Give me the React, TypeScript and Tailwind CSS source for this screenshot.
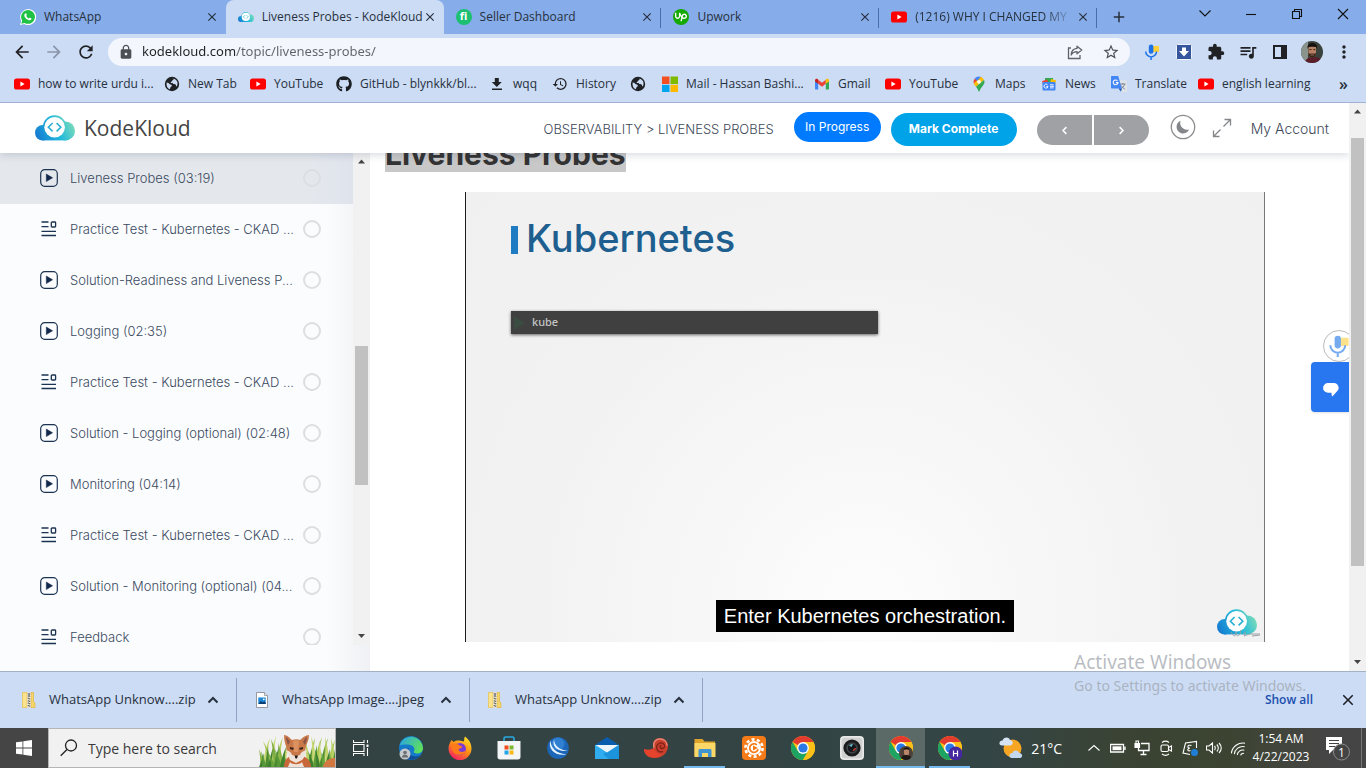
import type { ReactNode } from "react";
import {
  MdArrowBack,
  MdArrowForward,
  MdRefresh,
  MdLock,
  MdExtension,
  MdQueueMusic,
  MdStarBorder,
  MdMoreVert,
  MdClose,
  MdHistory,
  MdAdd,
} from "react-icons/md";
import { SiUpwork } from "react-icons/si";
import { FaGithub } from "react-icons/fa";

/* ---------- drawings ---------- */

function CloudLogo({ id, className }: { id: string; className: string }) {
  return (
    <svg viewBox="0 0 40 26" className={className} aria-hidden="true">
      <defs>
        <linearGradient id={id} gradientUnits="userSpaceOnUse" x1="0" y1="24" x2="38" y2="6">
          <stop offset="0" stopColor="#1674d0" />
          <stop offset="0.55" stopColor="#1fb9dc" />
          <stop offset="1" stopColor="#7edcb9" />
        </linearGradient>
      </defs>
      <g fill={`url(#${id})`}>
        <circle cx="7.7" cy="17.7" r="7.7" />
        <circle cx="19.6" cy="12" r="11.700" />
        <circle cx="30.5" cy="15.900" r="9.500" />
        <rect x="7" y="14" width="24" height="11.400" />
      </g>
      <circle cx="19.600" cy="12.300" r="10.300" fill="#fff" />
      <path
        d="M17.600 8 13.400 12.200l4.200 4.200M21.600 8l4.200 4.200-4.200 4.200"
        fill="none"
        stroke="#27afd3"
        strokeWidth="1.600"
      />
    </svg>
  );
}

function YouTube() {
  return (
    <svg viewBox="0 0 16 16" className="size-4 shrink-0" aria-hidden="true">
      <rect x="0" y="2.4" width="16" height="11.2" rx="2.6" fill="#f00" />
      <path d="M6.4 5.6v4.8L10.6 8Z" fill="#fff" />
    </svg>
  );
}

function WhatsApp() {
  return (
    <svg viewBox="0 0 16 16" className="size-4 shrink-0" aria-hidden="true">
      <path d="M0 16 1.2 11.9A8 8 0 1 1 4.2 15Z" fill="#fff" />
      <path d="M1.3 14.7 2.2 11.6A6.9 6.9 0 1 1 4.6 13.9Z" fill="#20c245" />
      <path
        d="M5.2 4.400C5.800 4 6.200 4.200 6.400 4.700L6.800 5.800C6.900 6.200 6.300 6.700 6.300 7 6.800 8 7.700 8.900 8.800 9.400 9.200 9.500 9.600 8.600 10 8.700L11.200 9.300C11.800 9.700 11.300 10.800 10.300 11.200 8.400 11.900 4 9 4.300 6 4.400 5.300 4.700 4.700 5.200 4.400Z"
        fill="#fff"
      />
    </svg>
  );
}

function Fiverr() {
  return (
    <span className="flex size-4 shrink-0 items-center justify-center rounded-full bg-[#1dbf73] pb-px text-[11px] font-bold text-white" aria-hidden="true">
      fi
    </span>
  );
}

function Upwork() {
  return (
    <span className="flex size-4 shrink-0 items-center justify-center rounded-full bg-[#14a800] text-[12px] text-white" aria-hidden="true">
      <SiUpwork />
    </span>
  );
}

function Globe() {
  return (
    <svg viewBox="0 0 16 16" className="size-4 shrink-0" aria-hidden="true">
      <circle cx="8" cy="8" r="7.200" fill="#202124" />
      <path
        d="M2.600 6.500c1.500.3 2 .2 2.600 1.200.7 1 2.500.4 2.600 1.700 0 1.300-1.300 1.100-1.400 2.200 0 .8-.4 1.400-.9 1.700C3.300 12.200 2.200 10 2.600 6.500ZM8 2.400c1.300-.1 1.600.3 1.500 1-.2.8-1.400.5-1.500 1.500 0 .9-1.600.5-1.500 1.400.3.8 2.200.2 2.600 1.200.4.900 1.800.3 2.500 1 .8.7.200 1.800 1.100 1.900 1.200-2 1-4.300.2-5.500C11.800 3.300 10.300 2.300 8 2.400Z"
        fill="#ccdcf5"
      />
    </svg>
  );
}

function DownloadMark() {
  return (
    <svg viewBox="0 0 16 16" className="size-4 shrink-0" aria-hidden="true" fill="#202124">
      <path d="M5.800 2h4v4h3L7.800 11 2.800 6h3ZM3 12.500h10V14H3Z" />
    </svg>
  );
}

function Microsoft() {
  return (
    <svg viewBox="0 0 16 16" className="size-4 shrink-0" aria-hidden="true">
      <path d="M0 .5h7.500V8H0Z" fill="#f25022" />
      <path d="M8.500.5H16V8H8.500Z" fill="#7fba00" />
      <path d="M0 8.800h7.500V16H0Z" fill="#00a4ef" />
      <path d="M8.500 8.800H16V16H8.500Z" fill="#ffb900" />
    </svg>
  );
}

function Gmail() {
  return (
    <svg viewBox="0 0 16 16" className="size-4 shrink-0" aria-hidden="true">
      <path d="M1 4v8.500c0 .6.4 1 1 1h2.200V7.300Z" fill="#4285f4" />
      <path d="M15 4v8.500c0 .6-.4 1-1 1h-2.200V7.300Z" fill="#34a853" />
      <path d="M4.200 3.800v4L8 10.700l3.800-2.900v-4L8 6.700Z" fill="#ea4335" />
      <path d="M1 4.300c0-1.500 1.600-2 2.600-1.300l.6.800v4L1 5.500Z" fill="#c5221f" />
      <path d="M15 4.300c0-1.500-1.600-2-2.600-1.300l-.6.800v4L15 5.500Z" fill="#fbbc04" />
    </svg>
  );
}

function Maps() {
  return (
    <svg viewBox="0 0 16 16" className="size-4 shrink-0" aria-hidden="true">
      <path d="M3.700 2.500A5.600 5.600 0 0 0 2.800 7.500L7 5.200Z" fill="#ea4335" />
      <path d="M2.700 7.400c.6 1.300 1.500 2.300 2.300 3.400L13 4A5.500 5.500 0 0 0 9.800.8Z" fill="#fbbc04" />
      <path d="M9.700.8A5.500 5.500 0 0 0 3.700 2.500L6.400 5Z" fill="#4285f4" />
      <path d="M5 10.800c1.300 1.700 2 2.700 2.400 4.200.2.700 1 .7 1.200 0 1-3.700 4.900-5.500 4.900-9.500 0-.6-.2-1.100-.5-1.500Z" fill="#34a853" />
      <circle cx="8" cy="5.800" r="1.900" fill="#fff" />
    </svg>
  );
}

function News() {
  return (
    <svg viewBox="0 0 16 16" className="size-4 shrink-0" aria-hidden="true">
      <path d="M4 2h8v5H4Z" fill="#34a853" />
      <path d="m10 3 5 1.300-1 5L9 8Z" fill="#fbbc04" />
      <path d="m1.200 5 5-1.500L8 8 2 9Z" fill="#ea4335" />
      <rect x="1.500" y="6" width="13" height="8.500" rx="1" fill="#4285f4" />
      <path d="M6.500 8.800a2 2 0 1 0 .5 1.600H5.200M9 8.800h3.500M9 10.300h4M9 11.900h3.500" stroke="#fff" fill="none" strokeWidth=".9" />
    </svg>
  );
}

function Translate() {
  return (
    <svg viewBox="0 0 16 16" className="size-4 shrink-0" aria-hidden="true">
      <path d="M6.500 4.500H15c.6 0 1 .4 1 1V15c0 .5-.4 1-1 1H9.800Z" fill="#dfe3e8" />
      <path d="M9 8h5.500M11.800 7v1M13.500 8c-.3 2-2 3.800-3.500 4.600M10.500 9.500c.6 1.500 2 3 3.300 3.600" stroke="#6f7c8d" fill="none" strokeWidth=".9" />
      <path d="M1 0h6.200l3.600 12.500H1c-.6 0-1-.4-1-1V1c0-.6.400-1 1-1Z" fill="#4285f4" />
      <path d="m7.500 12.500 2.500 3.300.8-3.300Z" fill="#1a56c4" />
      <path d="M6.400 4.800A2.400 2.400 0 1 0 7 6.600H4.800" stroke="#fff" fill="none" strokeWidth="1.100" />
    </svg>
  );
}

function VoiceMic({ className }: { className: string }) {
  return (
    <svg viewBox="0 0 16 16" className={className} aria-hidden="true">
      <rect x="9" y="2" width="6" height="6" rx=".5" fill="#fdd03b" />
      <rect x="4.800" y=".5" width="4.600" height="9.300" rx="2.300" fill="#1a73e8" />
      <path d="M1.700 7.500a5.400 5.400 0 0 0 10.800 0M7.100 13v3" stroke="#1a73e8" strokeWidth="1.500" fill="none" />
    </svg>
  );
}

function Share() {
  return (
    <svg viewBox="0 0 18 18" className="size-[18px]" fill="none" stroke="#5f6368" strokeWidth="1.300" aria-hidden="true">
      <path d="M5 5H2.500v10.500h11.500V12" />
      <path d="M11 3.200 15.800 7 11 10.800V8.600C8 8.600 6.300 9.700 5.200 12 5.300 8.300 7.300 5.700 11 5.400Z" strokeLinejoin="round" />
    </svg>
  );
}

function BlueDownload() {
  return (
    <svg viewBox="0 0 16 16" className="size-4" aria-hidden="true">
      <rect x=".5" y=".5" width="15" height="15" rx="1" fill="#35559d" stroke="#eef3fb" />
      <path d="M6 3.500h4V7h3l-5 5.500L3 7h3Z" fill="#fff" />
    </svg>
  );
}

function Portrait({ className }: { className: string }) {
  return (
    <svg viewBox="0 0 22 22" className={className} aria-hidden="true">
      <clipPath id="portrait-round">
        <circle cx="11" cy="11" r="11" />
      </clipPath>
      <g clipPath="url(#portrait-round)">
        <path d="M0 0h22v22H0Z" fill="#39423d" />
        <path d="M0 0h7v22H0Z" fill="#8a948c" />
        <path d="M4 22c0-4 4-6 8-6s10 1 10 6Z" fill="#5a1e2b" />
        <path d="M7.500 6h7.500v6c0 3-1.800 5-3.800 5S7.500 15 7.500 12Z" fill="#b98265" />
        <path d="M6.500 8C6 3 9 2 11.500 2s5.300 1.500 4.500 6l-1-2-4-.8L7.500 6Z" fill="#17120f" />
        <path d="M7.500 12c1 1 2.200.6 3.700.6s2.800.4 3.800-.6c0 3.500-1.800 5-3.800 5s-3.700-1.500-3.700-5Z" fill="#3a251c" />
        <path d="M9.500 14h3.500" stroke="#a87c66" strokeWidth=".8" />
        <path d="M8.500 8.600h2M12.300 8.600h2" stroke="#2b1b15" strokeWidth=".9" />
      </g>
    </svg>
  );
}

function Triangle({ down = false }: { down?: boolean }) {
  return (
    <svg viewBox="0 0 17 17" className="size-[17px] shrink-0" aria-hidden="true">
      <path d={down ? "M5 6h7L8.500 10Z" : "M5 10.500h7L8.500 6.500Z"} fill="#444" />
    </svg>
  );
}

function PlayBox() {
  return (
    <svg viewBox="0 0 18 18" className="size-[18px] shrink-0" aria-hidden="true">
      <rect x=".7" y=".7" width="16.600" height="16.600" rx="4" fill="none" stroke="#1b3350" strokeWidth="1.200" />
      <path d="M6.300 5v7.600L12.600 8.800Z" fill="#12284a" stroke="#12284a" strokeWidth=".5" strokeLinejoin="round" />
    </svg>
  );
}

function QuizLines() {
  return (
    <svg viewBox="0 0 18 18" className="size-[18px] shrink-0" fill="none" stroke="#1b3350" strokeWidth="1.300" aria-hidden="true">
      <path d="M1.500 2h7M1.500 6.600h7M1.500 11.400h14.500M1.500 15.500h14.500" />
      <rect x="11.300" y="2" width="4.300" height="5" rx=".8" />
    </svg>
  );
}

function ZipFile() {
  return (
    <svg viewBox="0 0 16 16" className="size-4 shrink-0" aria-hidden="true">
      <path d="M1.500.5H6V15.500H1.500Z" fill="#fbe28d" stroke="#e7c14b" strokeWidth=".7" />
      <path d="M10 .5h2.500V10l1.500 1v4.500h-4Z" fill="#f6d56c" stroke="#dfb53c" strokeWidth=".7" />
      <path d="M6 .500h4v15H6Z" fill="#efe6c8" />
      <path d="M7.300 1v14M8.700 1.500V15" stroke="#555" strokeWidth="1.100" strokeDasharray="1.200 1.200" />
      <path d="M7 1h2v4H7Z" fill="#8b8d90" />
    </svg>
  );
}

function ImageFile() {
  return (
    <svg viewBox="0 0 16 16" className="size-4 shrink-0" aria-hidden="true">
      <path d="M2.500.5h8L13.500 3.500v12h-11Z" fill="#fff" stroke="#8b8f96" strokeWidth=".9" />
      <path d="M10.500.5v3h3" fill="#e7e9ec" stroke="#8b8f96" strokeWidth=".8" />
      <rect x="4.300" y="5.500" width="7.400" height="6.500" fill="#1c86d8" />
      <path d="m4.300 12 2.700-3 1.700 1.500 1.500-1.200 1.500 1.500V12Z" fill="#0b3c6f" />
      <circle cx="9.800" cy="7.300" r=".9" fill="#fff" />
    </svg>
  );
}

function Chevron({ className }: { className: string }) {
  return (
    <svg viewBox="0 0 12 12" className={className} fill="none" stroke="currentColor" strokeWidth="2" aria-hidden="true">
      <path d="m1.500 8.500 4.500-4.500 4.500 4.500" />
    </svg>
  );
}

/* Each blade: base x, tip x, tip y, shade. */
const blades: [number, number, number, string][] = [
  [3, 0, 20, "#8fb544"], [6, 11, 9, "#c3d56c"], [10, 4, 12, "#a5c352"], [13, 17, 7, "#c9d977"],
  [16, 12, 10, "#7fae3f"], [19, 24, 8, "#b9cf60"], [22, 19, 14, "#8ab544"], [25, 30, 12, "#c3d56c"],
  [49, 46, 12, "#b9cf60"], [52, 56, 9, "#8fb544"], [55, 52, 7, "#c9d977"], [58, 63, 8, "#a5c352"],
  [61, 60, 12, "#c3d56c"], [64, 69, 9, "#7fae3f"], [68, 66, 8, "#c3d56c"], [71, 76, 11, "#a5c352"], [74, 72, 9, "#b9cf60"],
  [2, 5, 24, "#3f8030"], [5, 2, 22, "#59993a"], [8, 9, 17, "#4b8c33"], [11, 14, 19, "#3f8030"],
  [14, 9, 23, "#66a33c"], [17, 20, 17, "#4b8c33"], [20, 16, 20, "#59993a"], [23, 27, 18, "#3f8030"], [26, 25, 24, "#4b8c33"],
  [50, 53, 20, "#4b8c33"], [53, 49, 22, "#3f8030"], [56, 58, 16, "#59993a"], [59, 56, 20, "#3f8030"],
  [62, 66, 19, "#4b8c33"], [65, 62, 23, "#66a33c"], [68, 71, 20, "#3f8030"], [72, 70, 24, "#59993a"], [75, 76, 20, "#4b8c33"],
];

function Fox() {
  return (
    <svg viewBox="0 0 76 38" className="h-[38px] w-[76px] shrink-0" aria-hidden="true">
      {blades.map(([x, tx, ty, fill], i) => (
        <path key={i} fill={fill} d={`M${x - 2} 38Q${x - 1} ${ty + 12} ${tx} ${ty}Q${x + 2} ${ty + 12} ${x + 2} 38Z`} />
      ))}
      <path d="M64 38c1-6 6-9 12-9v9Z" fill="#d2773f" />
      <path d="M25 38c0-7 4-12 12-12s15 4 15 12Z" fill="#c8683a" />
      <path d="M25 6c3 0 6 3 8 5 3-1 6-1 8 0 2-2 6-5 9-5 0 5-2 8-3 11l-1 6-4 6-5 3-5-3-4-6-1-6c-1-3-2-6-2-11Z" fill="#c9784a" />
      <path d="M27 8c2 1 3 3 4 5l-2 3c-1-3-2-5-2-8ZM48 8c-2 1-3 3-4 5l2 3c1-3 2-5 2-8Z" fill="#8a5646" />
      <path d="m34 12 3-1 3 1-1 11h-4Z" fill="#dc9160" />
      <path d="M27 21c3 1 5 2 6 5l4 1 4-1c1-3 3-4 7-5-1 4-3 8-5 10l-6 3-6-3Z" fill="#efe4dc" />
      <path d="m31 18 4 1-1 2-3-1ZM44 18l-4 1 1 2 3-1Z" fill="#3b2418" />
      <path d="M35.500 26.500h3.500l-1 3h-1.500Z" fill="#241a17" />
      <path d="M31 33c2 3 10 3 12 0l2 5H29Z" fill="#efe2d8" />
    </svg>
  );
}

function Chrome({ badge }: { badge?: ReactNode }) {
  return (
    <svg viewBox="0 0 24 24" className="size-6" aria-hidden="true">
      <circle cx="12" cy="12" r="12" fill="#fbc116" />
      <path d="M12 12 1.600 6A12 12 0 0 1 22.400 6H12Z" fill="#e33b2e" />
      <path d="M1.600 6A12 12 0 0 0 12 24l5.200-9L12 12 6.800 15Z" fill="#1da462" />
      <path d="M12 6h10.400A12 12 0 0 1 12 24l5.200-9Z" fill="#fbc116" />
      <circle cx="12" cy="12" r="5.900" fill="#fff" />
      <circle cx="12" cy="12" r="4.600" fill="#2a79e6" />
      {badge}
    </svg>
  );
}

const taskbarApps: { label: string; icon: ReactNode; state?: string }[] = [
  {
    label: "Microsoft Edge",
    icon: (
      <svg viewBox="0 0 24 24" className="size-6">
        <defs>
          <linearGradient id="edge-top" x1="0" x2="1" y1="0.200" y2="0.600">
            <stop offset="0" stopColor="#2aa7e0" />
            <stop offset="1" stopColor="#5fe05a" />
          </linearGradient>
        </defs>
        <circle cx="12" cy="12" r="12" fill="#1579c9" />
        <path d="M.6 9A12 12 0 0 1 24 12c0 4-3 5.500-6 5.500-2.500 0-3.800-1-3-2.500 1-1.800.5-5-3.500-6C7 8 2.500 9 .6 9Z" fill="url(#edge-top)" />
        <path d="M10 12c-2 5 2 9 7 8.500 2-.2 3.500-1 4.500-1.500A12 12 0 0 1 8 23C5 19 6 13 10 12Z" fill="#0f4d96" />
        <circle cx="6" cy="18" r="5.500" fill="#c6c9cc" />
        <circle cx="6" cy="16.500" r="1.800" fill="#6a6f74" />
        <path d="M2.800 21.500c.4-4 6-4 6.400 0Z" fill="#6a6f74" />
      </svg>
    ),
  },
  {
    label: "Firefox",
    icon: (
      <svg viewBox="0 0 24 24" className="size-6">
        <defs>
          <linearGradient id="fox-fire" x1="0.800" x2="0.200" y1="0" y2="1">
            <stop offset="0" stopColor="#ffe226" />
            <stop offset="0.500" stopColor="#ff8a16" />
            <stop offset="1" stopColor="#f5156c" />
          </linearGradient>
        </defs>
        <path d="M17 .5c4 3 6.500 7 6.500 12A11.500 11.500 0 0 1 .5 12.500C.5 9 2 6.500 3.500 4L5.500 6c2-1.500 4-1.800 6-1.500L16 5.500C16.300 4 16 2 17 .5Z" fill="url(#fox-fire)" />
        <circle cx="12" cy="13" r="6" fill="#7b3bd8" />
        <path d="M3 9c3-2 6-2 8.500.5 2 .3 3 1 2.500 2-1 1-3 .8-3.500 2 .5 3 5 3 7.500 1-1 5-10 6-13 1C3.500 13 3 11 3 9Z" fill="#ff7a1a" />
      </svg>
    ),
  },
  {
    label: "Microsoft Store",
    icon: (
      <svg viewBox="0 0 24 24" className="size-6">
        <path d="M7 6V2.500c0-.8.500-1.500 1.500-1.500h7c1 0 1.500.7 1.500 1.500V6" fill="none" stroke="#29a9e0" strokeWidth="1.600" />
        <path d="M.5 5h23v16c0 1.500-1 2.500-2.500 2.500H3C1.500 23.500.5 22.500.5 21Z" fill="#f4f5f6" />
        <path d="M7.500 9.500h4v4h-4Z" fill="#f04f1d" />
        <path d="M12.500 9.500h4v4h-4Z" fill="#7eb82f" />
        <path d="M7.500 14.500h4v4h-4Z" fill="#22a5e6" />
        <path d="M12.500 14.500h4v4h-4Z" fill="#fbb917" />
      </svg>
    ),
  },
  {
    label: "Remote tool",
    icon: (
      <svg viewBox="0 0 24 24" className="size-6">
        <circle cx="12" cy="12" r="10.800" fill="#1c66b7" />
        <circle cx="12" cy="8" r="6.500" fill="#2f7fd2" />
        <path d="M4.500 4.500C5 12 9.500 17 20.500 18.500 9 20.500 1.500 13 4.500 4.500ZM8 3.500c.5 6 5 10.500 14 11C13 16.500 5.500 11.500 8 3.500Z" fill="#e5f2ff" />
      </svg>
    ),
  },
  {
    label: "Mail",
    icon: (
      <svg viewBox="0 0 24 24" className="size-6">
        <path d="M0 9 12 1l12 8v4H0Z" fill="#0a5dac" />
        <path d="M0 9v14h24V9Z" fill="#2fadf0" />
        <path d="M24 9v14H14L8 18Z" fill="#1b93dd" />
        <path d="M.5 9h23L12 16.500Z" fill="#eef5fa" />
      </svg>
    ),
  },
  {
    label: "Nautilus",
    icon: (
      <svg viewBox="0 0 24 24" className="size-6">
        <path d="M0 13c4 1.500 7 1 10-1C7 6 11 2 16 2c5 0 8 4 8 8 0 7-6 12-12 12C5 22 0 18 0 13Z" fill="#c9402d" />
        <path d="M0 13c4 1.500 7 1 10-1 1 4 4 6 8 6-5 6-18 5-18-5Z" fill="#e5432c" />
        <path d="M10 12C8.500 6 12 3 16 3c4.500 0 7 3 7 7" fill="none" stroke="#e58573" strokeWidth="1.300" />
        <path d="M19 15.500c-6 2.500-9-6-3-8.500 5-1.200 6 5 2.500 5.500-3 .3-3-3-1-3" fill="none" stroke="#7d2018" strokeWidth="1.300" />
      </svg>
    ),
  },
  {
    label: "File Explorer",
    state: "running",
    icon: (
      <svg viewBox="0 0 24 24" className="size-6">
        <path d="M1.500 3h8l2 2.500H22V20H1.500Z" fill="#dfa42a" />
        <path d="M1.500 7h21v14h-21Z" fill="#fbd768" />
        <path d="M5.500 21v-6.500c0-1 .7-1.500 1.500-1.500h10c1 0 1.500.7 1.500 1.500V21H15v-4H9v4Z" fill="#3f94d1" />
      </svg>
    ),
  },
  {
    label: "Recorder",
    icon: (
      <svg viewBox="0 0 24 24" className="size-6">
        <rect width="24" height="24" rx="4" fill="#f47b18" />
        <circle cx="12" cy="12" r="8.600" fill="none" stroke="#fff" strokeWidth="2.600" strokeDasharray="3 2.400" />
        <circle cx="12" cy="12" r="7" fill="#fff" />
        <path d="M14.800 8.800a4.300 4.300 0 1 0 1.300 4.500" fill="none" stroke="#f47b18" strokeWidth="1.700" />
        <path d="M11 9.500v5l5-2.500Z" fill="#f47b18" />
      </svg>
    ),
  },
  { label: "Google Chrome", icon: <Chrome /> },
  {
    label: "Camera",
    icon: (
      <svg viewBox="0 0 24 24" className="size-6">
        <rect width="24" height="24" rx="4" fill="#dcdcdc" />
        <rect x="1" y="1" width="22" height="22" rx="3.500" fill="#d0d0d0" stroke="#f4f4f4" />
        <circle cx="12" cy="12" r="8.600" fill="#1a1b1d" />
        <circle cx="12" cy="12" r="5.800" fill="#3d4347" />
        <circle cx="12" cy="12" r="4" fill="#14171c" />
        <path d="M9 9.500a4 4 0 0 1 4-1.500l-1.500 3Z" fill="#67b7c4" />
        <path d="M13 14.500c1.500 0 2.500-1 2.500-2.500Z" fill="#c7432f" stroke="#c7432f" />
      </svg>
    ),
  },
  {
    label: "Google Chrome, first profile",
    state: "active",
    icon: (
      <Chrome
        badge={
          <g>
            <circle cx="17" cy="17" r="7" fill="#4d4037" />
            <path d="M15 13h5v4c0 2-1.200 3.300-2.500 3.300S15 19 15 17Z" fill="#bb8569" />
            <path d="M14.500 14c0-3 5.500-3.500 6 0l-3-.7Z" fill="#15100e" />
            <path d="M12 22c1-2.500 3-3 5.500-3s4 1 4.500 2.500C19 25 14 24.500 12 22Z" fill="#1d1716" />
          </g>
        }
      />
    ),
  },
  {
    label: "Google Chrome, second profile",
    state: "open",
    icon: (
      <Chrome
        badge={
          <g>
            <circle cx="17.500" cy="17.500" r="7" fill="#4527a0" />
            <path d="M15.500 14.500v6M19.500 14.500v6M15.500 17.500h4" stroke="#fff" strokeWidth="1.200" />
          </g>
        }
      />
    ),
  },
];

/* ---------- data ---------- */

const tabs = [
  { title: "WhatsApp", icon: <WhatsApp /> },
  { title: "Liveness Probes - KodeKloud", icon: <CloudLogo id="tab-cloud" className="w-4 shrink-0" />, active: true },
  { title: "Seller Dashboard", icon: <Fiverr />, divider: true },
  { title: "Upwork", icon: <Upwork />, divider: true },
  { title: "(1216) WHY I CHANGED MY", icon: <YouTube />, divider: true, fade: true },
];

const bookmarks = [
  { label: "how to write urdu i...", icon: <YouTube />, width: "w-[150px]" },
  { label: "New Tab", icon: <Globe />, width: "w-[86px]" },
  { label: "YouTube", icon: <YouTube />, width: "w-[86px]" },
  { label: "GitHub - blynkkk/bl...", icon: <FaGithub className="size-4 shrink-0 text-[#1b1f23]" />, width: "w-[153px]" },
  { label: "wqq", icon: <DownloadMark />, width: "w-[63px]" },
  { label: "History", icon: <MdHistory className="size-4 shrink-0 text-[#202124]" />, width: "w-[78px]" },
  { label: "", icon: <Globe />, width: "w-8" },
  { label: "Mail - Hassan Bashi...", icon: <Microsoft />, width: "w-[152px]" },
  { label: "Gmail", icon: <Gmail />, width: "w-[71px]" },
  { label: "YouTube", icon: <YouTube />, width: "w-[86px]" },
  { label: "Maps", icon: <Maps />, width: "w-[70px]" },
  { label: "News", icon: <News />, width: "w-[70px]" },
  { label: "Translate", icon: <Translate />, width: "w-[87px]" },
  { label: "english learning", icon: <YouTube />, width: "w-[124px]" },
];

const lessons = [
  { title: "Liveness Probes (03:19)", video: true, current: true },
  { title: "Practice Test - Kubernetes - CKAD ..." },
  { title: "Solution-Readiness and Liveness P...", video: true },
  { title: "Logging (02:35)", video: true },
  { title: "Practice Test - Kubernetes - CKAD ..." },
  { title: "Solution - Logging (optional) (02:48)", video: true },
  { title: "Monitoring (04:14)", video: true },
  { title: "Practice Test - Kubernetes - CKAD ..." },
  { title: "Solution - Monitoring (optional) (04...", video: true },
  { title: "Feedback" },
];

const downloads = [
  { name: "WhatsApp Unknow....zip", icon: <ZipFile /> },
  { name: "WhatsApp Image....jpeg", icon: <ImageFile /> },
  { name: "WhatsApp Unknow....zip", icon: <ZipFile /> },
];

/* ---------- browser chrome ---------- */

function TabStrip() {
  return (
    <div className="flex h-[34px] shrink-0 bg-[#86ade9] pl-2">
      <div className="flex max-w-[1089px] min-w-0 flex-1">
        {tabs.map((tab) => (
          <div
            key={tab.title}
            className={
              tab.active
                ? "flex min-w-0 flex-1 items-center rounded-t-lg bg-[#ccdcf5] pr-[6px] pl-3"
                : "relative flex min-w-0 flex-1 items-center pr-[6px] pl-3"
            }
          >
            {tab.icon}
            <span
              className={
                tab.fade
                  ? "ml-2 min-w-0 flex-1 mask-r-from-80% text-[12px] whitespace-nowrap"
                  : "ml-2 min-w-0 flex-1 text-[12px] whitespace-nowrap"
              }
            >
              {tab.title}
            </span>
            <button type="button" aria-label={`Close ${tab.title}`} className="flex size-4 shrink-0 items-center justify-center">
              <MdClose className="size-[14px]" />
            </button>
            {tab.divider && <span className="absolute top-2 right-0 h-5 w-px bg-[#4a6fa8]" />}
          </div>
        ))}
      </div>
      <button type="button" aria-label="New tab" className="flex w-11 items-center justify-center">
        <MdAdd className="size-[18px]" />
      </button>
      <div className="ml-auto flex h-7 text-[#111]">
        {[
          ["Search tabs", "M2.500 4.500 8 10l5.500-5.500"],
          ["Minimize", "M3 8.500h10"],
          ["Restore", "M3.500 5.500h7v7h-7ZM5.500 5.500v-2h7v7h-2"],
          ["Close window", "m3 3 10 10M13 3 3 13"],
        ].map(([label, d]) => (
          <button key={label} type="button" aria-label={label} className="flex w-[46px] items-center justify-center">
            <svg viewBox="0 0 16 16" className="size-4" fill="none" stroke="currentColor" strokeWidth="1.100">
              <path d={d} />
            </svg>
          </button>
        ))}
      </div>
    </div>
  );
}

function Toolbar() {
  const tool = "flex w-8 items-center justify-center";
  return (
    <div className="flex h-9 shrink-0 items-center px-[6px] text-[#202124]">
      <button type="button" aria-label="Back" className={tool}><MdArrowBack className="size-[20px]" /></button>
      <button type="button" aria-label="Forward" className={tool}><MdArrowForward className="size-[20px] text-[#8a94a8]" /></button>
      <button type="button" aria-label="Reload" className={tool}><MdRefresh className="size-[20px]" /></button>
      <div className="mx-[6px] flex h-7 flex-1 items-center gap-2 rounded-full bg-[#f3f7fd] pr-2 pl-[10px]">
        <MdLock className="size-4 shrink-0 text-[#4d5156]" />
        <input
          aria-label="Address"
          defaultValue="kodekloud.com/topic/liveness-probes/"
          className="min-w-0 flex-1 bg-[linear-gradient(to_right,#202124_93px,#5f6368_93px)] bg-clip-text text-[13px] text-transparent outline-none [font-family:'Noto_Sans',sans-serif]"
        />
        <button type="button" aria-label="Share" className="w-6"><Share /></button>
        <button type="button" aria-label="Bookmark this page" className="ml-1 w-5"><MdStarBorder className="size-[18px] text-[#4d5156]" /></button>
      </div>
      <button type="button" aria-label="Voice typing" className={tool}><VoiceMic className="size-4" /></button>
      <button type="button" aria-label="Downloader" className={tool}><BlueDownload /></button>
      <button type="button" aria-label="Extensions" className={tool}><MdExtension className="size-[18px]" /></button>
      <button type="button" aria-label="Media controls" className={tool}><MdQueueMusic className="size-[20px]" /></button>
      <button type="button" aria-label="Side panel" className={tool}>
        <svg viewBox="0 0 14 14" className="size-[14px]"><path d="M0 0h14v14H0ZM2 2v10h6V2Z" fill="#202124" fillRule="evenodd" /></svg>
      </button>
      <button type="button" aria-label="Profile" className={tool}><Portrait className="size-[22px]" /></button>
      <button type="button" aria-label="Menu" className={tool}><MdMoreVert className="size-[20px]" /></button>
    </div>
  );
}

function BookmarkBar() {
  return (
    <nav aria-label="Bookmarks" className="flex h-[33px] shrink-0 items-center border-b border-[#9fb2d3] pb-1 pl-[14px]">
      {bookmarks.map((b, i) => (
        <a key={i} href="#" aria-label={b.label || "Bookmark"} className={`flex shrink-0 items-center gap-2 text-[12px] whitespace-nowrap ${b.width}`}>
          {b.icon}
          {b.label && <span>{b.label}</span>}
        </a>
      ))}
      <button type="button" aria-label="More bookmarks" className="mr-[18px] ml-auto text-[16px] leading-5 font-semibold">»</button>
    </nav>
  );
}

function DownloadBar() {
  return (
    <div className="flex h-[57px] shrink-0 items-center border-t border-[#a3b1c4] text-[13px]">
      {downloads.map((d, i) => (
        <div key={i} className="flex h-11 w-[233px] items-center border-r border-[#91a3c0] pr-[17px] pl-[17px] first:w-[237px] first:pl-[21px]">
          {d.icon}
          <span className="ml-3 flex-1 whitespace-nowrap">{d.name}</span>
          <button type="button" aria-label={`Options for ${d.name}`}><Chevron className="size-3" /></button>
        </div>
      ))}
      <button type="button" className="ml-auto px-4 text-[12px] font-semibold text-[#1a4fae]">Show all</button>
      <button type="button" aria-label="Close downloads bar" className="mr-[9px] ml-[10px]"><MdClose className="size-[18px] text-[#1b1d20]" /></button>
    </div>
  );
}

/* ---------- page ---------- */

function SiteHeader() {
  return (
    <header className="relative z-10 flex h-[50px] shrink-0 items-center bg-white pr-5 pl-[35px] text-[13px] text-[#3c4858] shadow-[0_2px_8px_rgba(40,50,90,0.18)]">
      <a href="#" className="flex items-center gap-[9px] text-[21px] leading-7 text-[#444] [font-family:'Open_Sans','Noto_Sans',sans-serif]">
        <CloudLogo id="site-cloud" className="w-10" />
        KodeKloud
      </a>
      <span className="mt-1 ml-auto font-light">OBSERVABILITY &gt; LIVENESS PROBES</span>
      <span className="mb-[2px] ml-5 flex h-[30px] w-[87px] items-center justify-center rounded-full bg-[#007bff] text-[12px] text-white">In Progress</span>
      <button type="button" className="mt-[2px] ml-[10px] h-[33px] w-[126px] rounded-full bg-[#00a2e8] text-[12px] font-bold text-white">Mark Complete</button>
      <div className="mt-1 ml-5 flex h-[30px] gap-[2px] text-white">
        <button type="button" aria-label="Previous lesson" className="flex w-[55px] items-center justify-center rounded-l-full bg-[#9fa1a4]">
          <Chevron className="size-[9px] -rotate-90" />
        </button>
        <button type="button" aria-label="Next lesson" className="flex w-[55px] items-center justify-center rounded-r-full bg-[#9fa1a4]">
          <Chevron className="size-[9px] rotate-90" />
        </button>
      </div>
      <button type="button" aria-label="Dark mode" className="mb-[2px] ml-[21px]">
        <svg viewBox="0 0 26 26" className="size-[26px]">
          <circle cx="13" cy="13" r="11.700" fill="none" stroke="#8d8d90" strokeWidth="1.300" />
          <path d="M10.500 6.800a6.600 6.600 0 1 0 8.700 8.700A7 7 0 0 1 10.500 6.800Z" fill="#85868a" />
        </svg>
      </button>
      <button type="button" aria-label="Full screen" className="ml-4">
        <svg viewBox="0 0 20 20" className="size-5" fill="none" stroke="#85868a" strokeWidth="1.300">
          <path d="M12.500 1.500h6v6M18.500 1.500l-7 7M7.500 18.500h-6v-6M1.500 18.500l7-7" />
        </svg>
      </button>
      <a href="#" className="ml-[19px] text-[14px] font-light">My Account</a>
    </header>
  );
}

function LessonList() {
  return (
    <aside className="flex w-[370px] shrink-0 bg-[linear-gradient(to_right,#fafcfe_88%,#eff1f4)] pb-[26px]">
      <ul className="min-w-0 flex-1 overflow-hidden">
        {lessons.map((l, i) => (
          <li
            key={i}
            className={
              l.current
                ? "flex h-[51px] items-center bg-[linear-gradient(to_right,#e4e8ed_88%,#dfe3ec)] pr-8 pb-px pl-10"
                : "flex h-[51px] items-center pr-8 pb-px pl-10"
            }
          >
            <a href="#" className="flex min-w-0 flex-1 items-center gap-3 text-[13px] font-light text-[#3b4a5e]">
              {l.video ? <PlayBox /> : <QuizLines />}
              <span className="pt-[2px] whitespace-nowrap">{l.title}</span>
            </a>
            <input
              type="checkbox"
              aria-label={`Completed: ${l.title}`}
              className="ml-3 size-[18px] shrink-0 appearance-none rounded-full border-2 border-[#dcdee1]"
            />
          </li>
        ))}
      </ul>
      <div className="flex w-[17px] flex-col items-stretch bg-[#f1f1f1]">
        <Triangle />
        <div className="grow-[176] basis-0" />
        <div className="mx-[2px] grow-[139] basis-0 bg-[#c1c1c1]" />
        <div className="grow-[143] basis-0" />
        <Triangle down />
      </div>
    </aside>
  );
}

function Player() {
  return (
    <section
      aria-label="Lesson video"
      className="relative mx-auto aspect-video w-full max-w-[800px] border-r border-l border-r-[#77787a] border-l-[#1b1c1e] bg-[radial-gradient(ellipse_at_50%_92%,#fdfdfd_0%,#f8f8f8_25%,#f2f2f2_60%,#f0f0f0_100%)] pt-[23px] pl-[45px]"
    >
      <h2 className="flex items-center gap-2 text-[38px] leading-[46px] font-medium text-[#1e5f90] [font-family:Inter,sans-serif]">
        <span className="mt-1 h-7 w-[7px] bg-[#1f7cc3]" />
        Kubernetes
      </h2>
      <div className="mt-[50px] flex h-[23px] w-[367px] items-center gap-[7px] bg-[#404040] pl-[2px] text-[11px] font-medium text-[#c4c4c4] shadow-[0_1px_3px_rgba(0,0,0,0.6)] [font-family:'Noto_Sans',sans-serif]">
        <svg viewBox="0 0 12 16" className="h-4 w-3" aria-hidden="true"><path d="M1 1v14l11-7Z" fill="#3b4d42" /></svg>
        kube
      </div>
      <p className="absolute inset-x-0 bottom-[10px] flex justify-center">
        <span className="bg-black px-2 text-[20px] leading-8 whitespace-nowrap text-white [font-family:'Liberation_Sans',Arial,sans-serif]">
          Enter Kubernetes orchestration.
        </span>
      </p>
      <div className="absolute right-[7px] bottom-[7px]">
        <CloudLogo id="video-cloud" className="w-10" />
        <svg viewBox="0 0 32 10" className="absolute top-[20px] left-[13px] h-[10px] w-8" fill="none" stroke="#98a0a4" aria-hidden="true">
          <path d="M1 3c3 5 5 5 5 0 0 4 2 5 4 2l1-4M13 6c2-6 4-2 1 1 5-2 4-1 6-2h10M22 7l8-1" />
        </svg>
      </div>
    </section>
  );
}

function WebPage() {
  return (
    <div className="flex min-h-0 flex-1 bg-white [font-family:Inter,sans-serif]">
      <div className="relative flex min-w-0 flex-1 flex-col overflow-hidden">
        <SiteHeader />
        <div className="flex min-h-0 flex-1">
          <LessonList />
          <main className="min-w-0 flex-1 overflow-hidden pr-1 pl-[15px]">
            <h1 className="-mt-[17px] mb-5 w-fit bg-[#c8c8c8] text-[30px] leading-9 font-bold text-[#333]">Liveness Probes</h1>
            <Player />
          </main>
        </div>
        <button type="button" aria-label="Voice input" className="absolute top-[227px] -right-[6px] flex size-8 items-center justify-center rounded-full border border-[#bbb] bg-white">
          <VoiceMic className="size-[22px] opacity-60" />
        </button>
        <button type="button" aria-label="Open chat" className="absolute top-[259px] right-0 flex h-[50px] w-[38px] items-center justify-center rounded-l bg-[#2876f0] pt-1 pl-[2px] shadow-sm">
          <svg viewBox="0 0 16 15" className="h-[15px] w-4"><path d="M5 1h6a4.800 4.800 0 0 1 2.600 8.700C12 11.500 11 13 9 14.500c-.4-1.500-.3-2.600-.6-3.700H5A4.900 4.900 0 0 1 5 1Z" fill="#fff" /></svg>
        </button>
      </div>
      <div className="flex w-[17px] shrink-0 flex-col bg-[#f1f1f1]">
        <Triangle />
        <div className="grow-[18] basis-0" />
        <div className="mx-[2px] grow-[428] basis-0 bg-[#c1c1c1]" />
        <div className="grow-[88] basis-0" />
        <Triangle down />
      </div>
    </div>
  );
}

/* ---------- desktop taskbar ---------- */

const trayIcons: { label: string; icon: ReactNode }[] = [
  { label: "Show hidden icons", icon: <path d="m2.500 10.500 5.500-5 5.500 5" /> },
  {
    label: "Battery",
    icon: (
      <g>
        <path d="M.5 4.500h13v7.500H.5ZM15 6.500v3.500" strokeWidth="1.300" />
        <path d="M2.500 6.300h9v3.900h-9Z" fill="currentColor" stroke="none" />
      </g>
    ),
  },
  {
    label: "Display",
    icon: (
      <g>
        <path d="M7 3.500h8v7H4.500V8M9.500 10.500v4M6.500 14.500h6" strokeWidth="1.300" />
        <path d="M1 3.500h4.500v4H1ZM2 3V1h2.500v2" />
        <path d="M1.500 4h4v3.500h-4Z" fill="currentColor" />
      </g>
    ),
  },
  {
    label: "Meet now",
    icon: (
      <g>
        <rect x="3" y="5" width="7.500" height="6.500" rx="1.500" />
        <path d="m10.500 7.500 3-1.500v5l-3-1.500M4 2.500c2-1.500 5-1.500 7 0M4 14c2 1.500 5 1.500 7 0" />
      </g>
    ),
  },
  {
    label: "Language sync",
    icon: (
      <g>
        <path d="M14.500 8V1.500L3.500 3 1 13 8 14.500" />
        <path d="M9.500 5.500c-4-1.500-5 3-1.500 2.500C5 8.500 5 12 8.500 10.500" />
        <circle cx="12.500" cy="12.500" r="3.500" fill="#1f7fd6" stroke="none" />
      </g>
    ),
  },
  { label: "Volume", icon: <path d="M.5 6v4h2.500L6.500 13V3L3 6ZM8.500 6c1 1 1 3 0 4M10.800 4.500c2 2 2 5 0 7M13 3c3 3 3 7 0 10" /> },
  {
    label: "Network",
    icon: <path d="M2 14C2 7 8 2 14.500 2.500M5 14.500c0-5 4-9 9.500-8.500M8 15c0-3 2.500-6 6.500-5.500M11.500 15c0-1.500 1.500-2.500 3-2.200" transform="rotate(6 8 8)" />,
  },
];

function Taskbar() {
  return (
    <footer className="flex h-10 shrink-0 items-stretch bg-[linear-gradient(to_right,#454545_0%,#454545_4%,#334243_24%,#344546_72%,#3a4334_82%,#3c4431_90%,#464545_97%)] text-white">
      <button type="button" aria-label="Start" className="flex w-12 items-center justify-center">
        <svg viewBox="0 0 16 16" className="size-4" fill="#fff"><path d="M0 2.300 6.500 1.400v6.200H0ZM7.300 1.300 16 0v7.600H7.300ZM0 8.400h6.500v6.200L0 13.700ZM7.300 8.400H16V16l-8.700-1.300Z" /></svg>
      </button>
      <label className="flex w-[288px] items-center overflow-hidden border border-[#b5b5b5] bg-[#f1f1f1] pl-[11px]">
        <svg viewBox="0 0 18 18" className="size-[18px] shrink-0" fill="none" stroke="#222" strokeWidth="1.300" aria-hidden="true">
          <circle cx="11" cy="6.500" r="5.500" />
          <path d="m7 10.500-6.300 6.300" />
        </svg>
        <input type="search" aria-label="Search" placeholder="Type here to search" className="ml-[10px] min-w-0 flex-1 bg-transparent text-[14px] outline-none placeholder:text-[#3a3a3a]" />
        <Fox />
      </label>
      <button type="button" aria-label="Task view" className="flex w-[50px] items-center justify-center">
        <svg viewBox="0 0 16 16" className="size-4" fill="none" stroke="#fff" strokeWidth="1.100">
          <path d="M.5 0v2.500H11V0M.5 4.500H11v7H.5ZM.5 16v-2.500H11V16M14.500 0v3M14.500 8v8" />
          <path d="M13.500 4.500h2v2.500h-2Z" fill="#fff" stroke="none" />
        </svg>
      </button>
      {taskbarApps.map((app) => (
        <button
          key={app.label}
          type="button"
          aria-label={app.label}
          className={
            app.state === "active"
              ? "flex w-[49px] items-center justify-center border-b-2 border-[#76b9ed] bg-[#5b6967] pt-[2px]"
              : "relative flex w-[49px] items-center justify-center"
          }
        >
          {app.icon}
          {(app.state === "running" || app.state === "open") && <span className="absolute inset-x-1 bottom-0 h-[2px] bg-[#76b9ed]" />}
        </button>
      ))}
      <button type="button" className="ml-auto flex items-center gap-2 text-[14px]">
        <svg viewBox="0 0 24 24" className="size-6" aria-hidden="true">
          <circle cx="13.500" cy="12.500" r="9" fill="#f6a623" />
          <path d="M3 9.500c-4-.5-3-5 .5-5C4.500.5 10.500.5 11 4c3.500.2 3.500 5 .5 5.500Z" fill="#d5e3f4" />
          <path d="M13 22c-4-.5-3-5 .5-5 1-3.500 6-3 6.500 0 4 0 4 5 1 5Z" fill="#c3d7f0" />
        </svg>
        21°C
      </button>
      <div className="ml-5 flex">
        {trayIcons.map((t) => (
          <button key={t.label} type="button" aria-label={t.label} className="flex w-6 items-center justify-center">
            <svg viewBox="0 0 16 16" className="size-4" fill="none" stroke="currentColor" strokeWidth="1.100">{t.icon}</svg>
          </button>
        ))}
      </div>
      <div className="flex w-[62px] flex-col items-center justify-center text-[12px] leading-[18px]">
        <span>1:54 AM</span>
        <span>4/22/2023</span>
      </div>
      <button type="button" aria-label="Notifications, 1 new" className="flex w-[49px] items-center justify-center">
        <svg viewBox="0 0 26 26" className="size-[26px]">
          <path d="M2 2h16v13H9l-4 4v-4H2Z" fill="#fff" />
          <path d="M5 5.500h10M5 8.500h10M5 11.500h6" stroke="#444" strokeWidth="1.100" />
          <circle cx="17.500" cy="17" r="8" fill="#444" stroke="#8c8c8c" />
          <text x="17.500" y="21.500" fontSize="12" textAnchor="middle" fill="#fff">1</text>
        </svg>
      </button>
      <div className="w-[5px] border-l border-[#777]" />
    </footer>
  );
}

export default function App() {
  return (
    <div className="relative flex h-screen flex-col overflow-hidden bg-[#ccdcf5] text-[#27303d] [font-family:'Open_Sans','Noto_Sans',sans-serif]">
      <TabStrip />
      <Toolbar />
      <BookmarkBar />
      <WebPage />
      <DownloadBar />
      <Taskbar />
      <div className="pointer-events-none absolute right-[60px] bottom-[72px] z-20 text-[#9aa0a8]/70 [font-family:'Noto_Sans',sans-serif]">
        <p className="text-[19px] leading-7">Activate Windows</p>
        <p className="text-[14px] leading-5 whitespace-nowrap">Go to Settings to activate Windows.</p>
      </div>
    </div>
  );
}
